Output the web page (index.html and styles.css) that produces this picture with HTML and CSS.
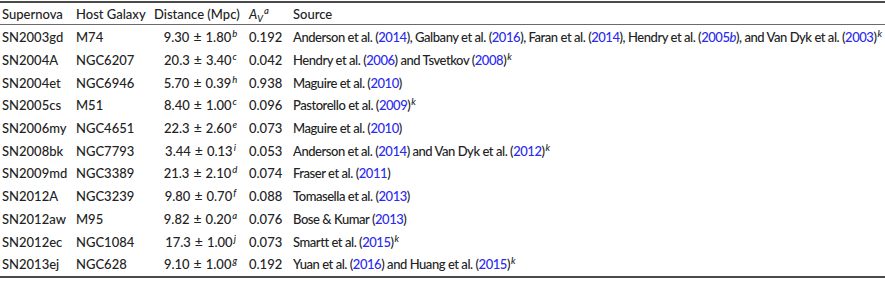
FILE: index.html
```html
<!DOCTYPE html>
<html>
<head>
<meta charset="utf-8">
<link rel="stylesheet" href="styles.css">
</head>
<body>
<table class="sn-table">
  <colgroup>
    <col class="c-sn"><col class="c-host"><col class="c-dist"><col class="c-av"><col class="c-src">
  </colgroup>
  <thead>
    <tr>
      <th>Supernova</th>
      <th>Host Galaxy</th>
      <th>Distance (Mpc)</th>
      <th><i>A</i><sub class="mv">V</sub><sup class="note">a</sup></th>
      <th>Source</th>
    </tr>
  </thead>
  <tbody>
    <tr><td>SN2003gd</td><td>M74</td><td class="dist">9.30<span class="pm">±</span>1.80<sup class="note">b</sup></td><td>0.192</td><td class="src">Anderson et al. (<a>2014</a>), Galbany et al. (<a>2016</a>), Faran et al. (<a>2014</a>), Hendry et al. (<a>2005<i>b</i></a>), and Van Dyk et al. (<a>2003</a>)<sup class="note">k</sup></td></tr>
    <tr><td>SN2004A</td><td>NGC6207</td><td class="dist">20.3<span class="pm">±</span>3.40<sup class="note">c</sup></td><td>0.042</td><td class="src">Hendry et al. (<a>2006</a>) and Tsvetkov (<a>2008</a>)<sup class="note">k</sup></td></tr>
    <tr><td>SN2004et</td><td>NGC6946</td><td class="dist">5.70<span class="pm">±</span>0.39<sup class="note">h</sup></td><td>0.938</td><td class="src">Maguire et al. (<a>2010</a>)</td></tr>
    <tr><td>SN2005cs</td><td>M51</td><td class="dist">8.40<span class="pm">±</span>1.00<sup class="note">c</sup></td><td>0.096</td><td class="src">Pastorello et al. (<a>2009</a>)<sup class="note">k</sup></td></tr>
    <tr><td>SN2006my</td><td>NGC4651</td><td class="dist">22.3<span class="pm">±</span>2.60<sup class="note">e</sup></td><td>0.073</td><td class="src">Maguire et al. (<a>2010</a>)</td></tr>
    <tr><td>SN2008bk</td><td>NGC7793</td><td class="dist">3.44<span class="pm">±</span>0.13<sup class="note">i</sup></td><td>0.053</td><td class="src">Anderson et al. (<a>2014</a>) and Van Dyk et al. (<a>2012</a>)<sup class="note">k</sup></td></tr>
    <tr><td>SN2009md</td><td>NGC3389</td><td class="dist">21.3<span class="pm">±</span>2.10<sup class="note">d</sup></td><td>0.074</td><td class="src">Fraser et al. (<a>2011</a>)</td></tr>
    <tr><td>SN2012A</td><td>NGC3239</td><td class="dist">9.80<span class="pm">±</span>0.70<sup class="note">f</sup></td><td>0.088</td><td class="src">Tomasella et al. (<a>2013</a>)</td></tr>
    <tr><td>SN2012aw</td><td>M95</td><td class="dist">9.82<span class="pm">±</span>0.20<sup class="note">a</sup></td><td>0.076</td><td class="src">Bose &amp; Kumar (<a>2013</a>)</td></tr>
    <tr><td>SN2012ec</td><td>NGC1084</td><td class="dist">17.3<span class="pm">±</span>1.00<sup class="note">j</sup></td><td>0.073</td><td class="src">Smartt et al. (<a>2015</a>)<sup class="note">k</sup></td></tr>
    <tr><td>SN2013ej</td><td>NGC628</td><td class="dist">9.10<span class="pm">±</span>1.00<sup class="note">g</sup></td><td>0.192</td><td class="src">Yuan et al. (<a>2016</a>) and Huang et al. (<a>2015</a>)<sup class="note">k</sup></td></tr>
  </tbody>
</table>
</body>
</html>
```
FILE: styles.css
```css
html, body {
  margin: 0;
  padding: 0;
  background: #ffffff;
}
body {
  padding-top: 1px;
  font-family: Lato, "Noto Sans", sans-serif;
  font-size: 13px;
  font-weight: 500;
  color: #222222;
}
.sn-table {
  width: 100%;
  border-collapse: collapse;
  table-layout: fixed;
  border-top: 2px solid #4a4a4a;
  border-bottom: 2px solid #4a4a4a;
}
.c-sn { width: 74px; }
.c-host { width: 78px; }
.c-dist { width: 95px; }
.c-av { width: 44px; }
.sn-table th {
  font-weight: 500;
  text-align: left;
  height: 21px;
  padding: 0 0 0 2px;
  border-bottom: 1px solid #6a6a6a;
  white-space: nowrap;
  line-height: 16px;
}
.sn-table td {
  height: 22.7px;
  padding: 0 0 0 2px;
  white-space: nowrap;
  line-height: 16px;
}
.sn-table tbody tr:first-child td { padding-top: 1px; }
.sn-table .dist { text-align: center; }
.sn-table .src { letter-spacing: -0.45px; }
.pm {
  display: inline-block;
  margin: 0 4px;
  font-size: 14px;
  letter-spacing: 0;
}
.sn-table a {
  color: #2a2af0;
  text-decoration: none;
}
.note {
  font-style: italic;
  font-size: 9.5px;
  line-height: 0;
  vertical-align: 5px;
  letter-spacing: 0;
  margin-left: 1px;
}
.mv {
  font-style: italic;
  font-size: 9px;
  line-height: 0;
  vertical-align: -3px;
}
```
